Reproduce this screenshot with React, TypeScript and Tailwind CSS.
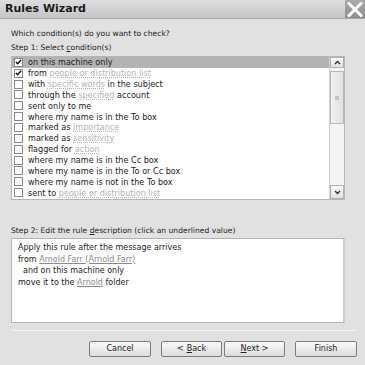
import React from "react";

type Part = { t: string; link?: boolean };
const rows: { parts: Part[]; checked?: boolean; sel?: boolean }[] = [
  { parts: [{ t: "on this machine only" }], checked: true, sel: true },
  { parts: [{ t: "from " }, { t: "people or distribution list", link: true }], checked: true },
  { parts: [{ t: "with " }, { t: "specific words", link: true }, { t: " in the subject" }] },
  { parts: [{ t: "through the " }, { t: "specified", link: true }, { t: " account" }] },
  { parts: [{ t: "sent only to me" }] },
  { parts: [{ t: "where my name is in the To box" }] },
  { parts: [{ t: "marked as " }, { t: "importance", link: true }] },
  { parts: [{ t: "marked as " }, { t: "sensitivity", link: true }] },
  { parts: [{ t: "flagged for " }, { t: "action", link: true }] },
  { parts: [{ t: "where my name is in the Cc box" }] },
  { parts: [{ t: "where my name is in the To or Cc box" }] },
  { parts: [{ t: "where my name is not in the To box" }] },
  { parts: [{ t: "sent to " }, { t: "people or distribution list", link: true }] },
];

function Check({ checked }: { checked?: boolean }) {
  return (
    <div className="w-[9px] h-[9px] border border-[#8a8a8a] bg-white flex items-center justify-center shrink-0">
      {checked && (
        <svg width="8" height="8" viewBox="0 0 8 8">
          <path d="M1 4 L3 6 L7 1.5" stroke="#111" strokeWidth="1.6" fill="none" />
        </svg>
      )}
    </div>
  );
}

function Btn({ children }: { children: React.ReactNode }) {
  return (
    <div className="h-[16px] rounded-[2px] border border-[#7d7d7d] bg-gradient-to-b from-[#fbfbfb] to-[#dcdcdc] flex items-center justify-center text-[8px] text-[#222]">
      {children}
    </div>
  );
}

export default function App() {
  return (
    <div
      className="w-[365px] h-[365px] bg-[#e1e1e1] overflow-hidden text-[#222] flex flex-col"
      style={{ fontFamily: '"DejaVu Sans", Verdana, sans-serif' }}
    >
      {/* title bar */}
      <div className="h-[19px] shrink-0 flex items-stretch bg-gradient-to-b from-[#dcdcdc] via-[#d2d2d2] to-[#c4c4c4] border-b border-[#a8a8a8]">
        <div className="flex-1 pl-[5px] flex items-center text-[11px] font-bold text-[#1a1a1a]">Rules Wizard</div>
        <div className="w-[20px] bg-gradient-to-b from-[#a9a9a9] to-[#8f8f8f] flex items-center justify-center">
          <svg width="16" height="15" viewBox="0 0 16 15">
            <path d="M2 1.5 L14 13.5 M14 1.5 L2 13.5" stroke="#fff" strokeWidth="3" strokeLinecap="square" />
          </svg>
        </div>
      </div>

      <div className="pl-[11px] pr-[8px] flex flex-col">
        <div className="mt-[9px] h-[12px] text-[7.6px] leading-[12px]">Which condition(s) do you want to check?</div>
        <div className="mt-[2px] h-[12px] text-[7.6px] leading-[12px]">
          Step 1: Select <span className="underline">c</span>ondition(s)
        </div>

        {/* list */}
        <div className="mt-[2px] w-[334px] h-[144px] border border-[#b5b5b5] bg-white flex">
          <div className="flex-1 flex flex-col">
            {rows.map((r, i) => (
              <div
                key={i}
                className={`h-[10.85px] flex items-center pl-[2px] gap-[5px] text-[8.1px] leading-none whitespace-nowrap ${r.sel ? "bg-[#b3b3b3]" : ""}`}
              >
                <Check checked={r.checked} />
                <span>
                  {r.parts.map((p, j) =>
                    p.link ? (
                      <span key={j} className="text-[#b4b4b4] underline decoration-dotted">
                        {p.t}
                      </span>
                    ) : (
                      <span key={j}>{p.t}</span>
                    )
                  )}
                </span>
              </div>
            ))}
          </div>
          <div className="w-[15px] flex flex-col bg-[#f4f4f4] border-l border-[#d0d0d0]">
            <div className="h-[11px] border border-[#b0b0b0] bg-gradient-to-b from-[#fafafa] to-[#e2e2e2] flex items-center justify-center">
              <svg width="7" height="5" viewBox="0 0 7 5">
                <path d="M1 4 L3.5 1.5 L6 4" stroke="#333" strokeWidth="1.4" fill="none" />
              </svg>
            </div>
            <div className="mt-[3px] h-[53px] border border-[#b8b8b8] bg-gradient-to-r from-[#f2f2f2] to-[#e0e0e0] flex items-center justify-center">
              <div className="w-[4px] h-[4px] bg-[#c4c4c4]" />
            </div>
            <div className="flex-1" />
            <div className="h-[14px] border border-[#b0b0b0] bg-gradient-to-b from-[#fafafa] to-[#e2e2e2] flex items-center justify-center">
              <svg width="7" height="5" viewBox="0 0 7 5">
                <path d="M1 1 L3.5 3.5 L6 1" stroke="#333" strokeWidth="1.4" fill="none" />
              </svg>
            </div>
          </div>
        </div>

        <div className="mt-[25px] h-[12px] text-[7.6px] leading-[12px]">
          Step 2: Edit the rule <span className="underline">d</span>escription (click an underlined value)
        </div>

        {/* description */}
        <div className="mt-[1px] w-[334px] h-[85px] border border-[#b5b5b5] border-r-[2px] border-r-[#cfcfcf] bg-white pl-[6px] pt-[3px] text-[8px] leading-[11.5px]">
          <div>Apply this rule after the message arrives</div>
          <div>
            from <span className="text-[#8a8a8a] underline">Arnold Farr (Arnold Farr)</span>
          </div>
          <div className="pl-[5px]">and on this machine only</div>
          <div>
            move it to the <span className="text-[#8a8a8a] underline">Arnold</span> folder
          </div>
        </div>

        <div className="mt-[7px] h-[1px] w-[346px] bg-[#c4c4c4] border-b border-[#f3f3f3]" />

        <div className="mt-[10px] flex justify-end w-[346px]">
          <div className="w-[62px]"><Btn>Cancel</Btn></div>
          <div className="ml-[10px] w-[61px]"><Btn>&lt; <span className="underline ml-[3px]">B</span>ack</Btn></div>
          <div className="ml-[2px] w-[61px]"><Btn><span className="underline">N</span>ext &gt;</Btn></div>
          <div className="ml-[10px] w-[62px]"><Btn>Finish</Btn></div>
        </div>
      </div>
    </div>
  );
}
